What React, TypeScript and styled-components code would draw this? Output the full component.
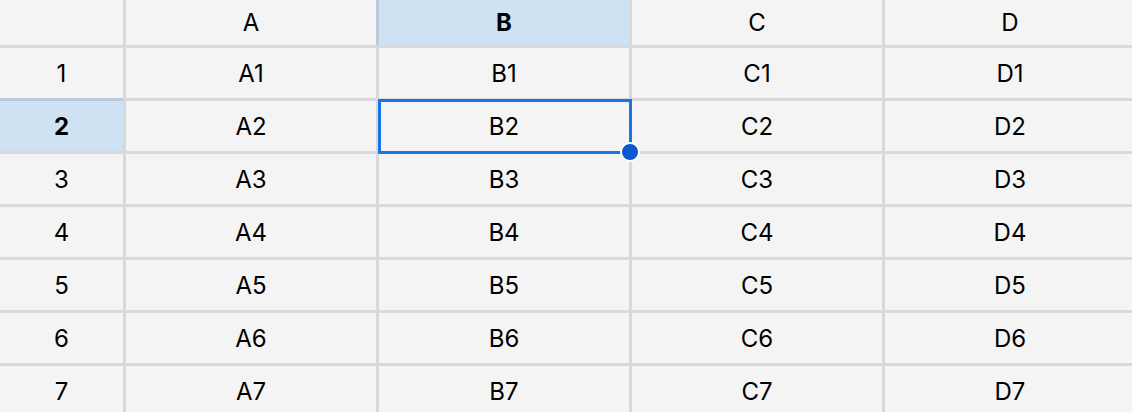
import styled, { createGlobalStyle } from "styled-components";

const columns = ["A", "B", "C", "D"];
const rows = [1, 2, 3, 4, 5, 6, 7];
const activeCol = "B";
const activeRow = 2;

const GlobalStyle = createGlobalStyle`
  html, body {
    margin: 0;
    padding: 0;
    background: #f4f4f4;
    overflow: hidden;
  }
  body {
    font-family: Inter, "Liberation Sans", sans-serif;
    color: #000;
  }
`;

const Sheet = styled.div`
  display: grid;
  grid-template-columns: 123px repeat(4, 250px);
  grid-template-rows: 45px;
  grid-auto-rows: 50px;
  gap: 3px;
  background: #d9d9d9;
  width: 1140px;
  height: 412px;
  overflow: hidden;
`;

const Cell = styled.div`
  display: flex;
  align-items: center;
  justify-content: center;
  background: #f4f4f4;
  font-size: 24px;
  position: relative;
`;

const HeaderCell = styled(Cell)<{ $active?: boolean; $side?: "top" | "left" }>`
  background: ${(p) => (p.$active ? "#cfe2f3" : "#f4f4f4")};
  font-weight: ${(p) => (p.$active ? 700 : 400)};
  box-shadow: ${(p) =>
    !p.$active
      ? "none"
      : p.$side === "top"
      ? "-3px 0 0 0 #b8cbdd"
      : "0 -3px 0 0 #b8cbdd"};
`;

const Selection = styled.div`
  position: absolute;
  inset: -2px -3px -3px -1px;
  border: 3px solid #1a73e8;
  pointer-events: none;
  z-index: 2;
`;

const FillHandle = styled.div`
  position: absolute;
  right: -11px;
  bottom: -11px;
  width: 16px;
  height: 16px;
  border-radius: 50%;
  background: #0b57d0;
  border: 2px solid #ffffff;
  z-index: 3;
`;

export default function App() {
  return (
    <>
      <GlobalStyle />
      <Sheet>
        <HeaderCell />
        {columns.map((c) => (
          <HeaderCell key={c} $active={c === activeCol} $side="top">
            {c}
          </HeaderCell>
        ))}
        {rows.map((r) => (
          <>
            <HeaderCell key={`h${r}`} $active={r === activeRow} $side="left">
              {r}
            </HeaderCell>
            {columns.map((c) => (
              <Cell key={`${c}${r}`}>
                {c}
                {r}
                {c === activeCol && r === activeRow && (
                  <Selection>
                    <FillHandle />
                  </Selection>
                )}
              </Cell>
            ))}
          </>
        ))}
      </Sheet>
    </>
  );
}
